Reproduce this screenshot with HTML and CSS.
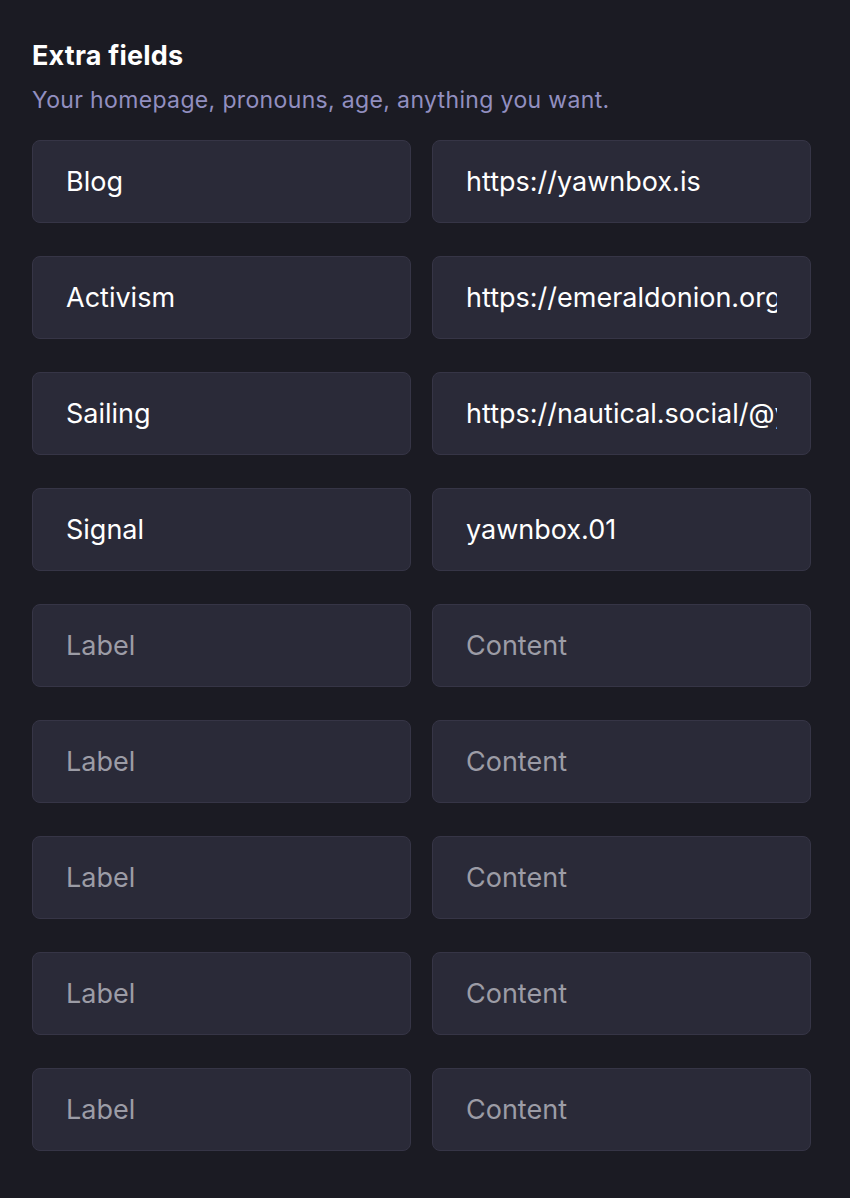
FILE: index.html
```html
<!DOCTYPE html>
<html>
<head>
<meta charset="utf-8">
<link rel="stylesheet" href="styles.css">
</head>
<body>
<section class="extra">
  <h2 class="title">Extra fields</h2>
  <p class="hint">Your homepage, pronouns, age, anything you want.</p>
  <div class="grid">
    <input class="field" type="text" value="Blog" placeholder="Label">
    <input class="field" type="text" value="https://yawnbox.is" placeholder="Content">
    <input class="field" type="text" value="Activism" placeholder="Label">
    <input class="field" type="text" value="https://emeraldonion.org" placeholder="Content">
    <input class="field" type="text" value="Sailing" placeholder="Label">
    <input class="field" type="text" value="https://nautical.social/@yawnbox" placeholder="Content">
    <input class="field" type="text" value="Signal" placeholder="Label">
    <input class="field" type="text" value="yawnbox.01" placeholder="Content">
    <input class="field" type="text" placeholder="Label">
    <input class="field" type="text" placeholder="Content">
    <input class="field" type="text" placeholder="Label">
    <input class="field" type="text" placeholder="Content">
    <input class="field" type="text" placeholder="Label">
    <input class="field" type="text" placeholder="Content">
    <input class="field" type="text" placeholder="Label">
    <input class="field" type="text" placeholder="Content">
    <input class="field" type="text" placeholder="Label">
    <input class="field" type="text" placeholder="Content">
  </div>
</section>
</body>
</html>
```

FILE: styles.css
```css
html, body {
  margin: 0;
  padding: 0;
  background: #1b1b23;
  font-family: Inter, "Noto Sans", sans-serif;
}
.extra {
  padding: 38px 38px 0 32px;
}
.title {
  margin: 0;
  font-size: 27px;
  font-weight: 700;
  color: #ffffff;
  line-height: 36px;
  letter-spacing: 0.2px;
}
.hint {
  margin: 11px 0 0 0;
  font-size: 23px;
  color: #928fc0;
  line-height: 30px;
  letter-spacing: 0.35px;
}
.grid {
  margin-top: 25px;
  display: grid;
  grid-template-columns: 379px 379px;
  column-gap: 21px;
  row-gap: 33px;
}
.field {
  box-sizing: border-box;
  width: 379px;
  height: 83px;
  margin: 0;
  padding: 0 33px 0 33px;
  background: #2a2a38;
  border: 1px solid #363546;
  border-radius: 8px;
  color: #ffffff;
  font-family: Inter, "Noto Sans", sans-serif;
  font-size: 27px;
  outline: none;
}
.field::placeholder {
  color: #9c9ca6;
  opacity: 1;
}
```
